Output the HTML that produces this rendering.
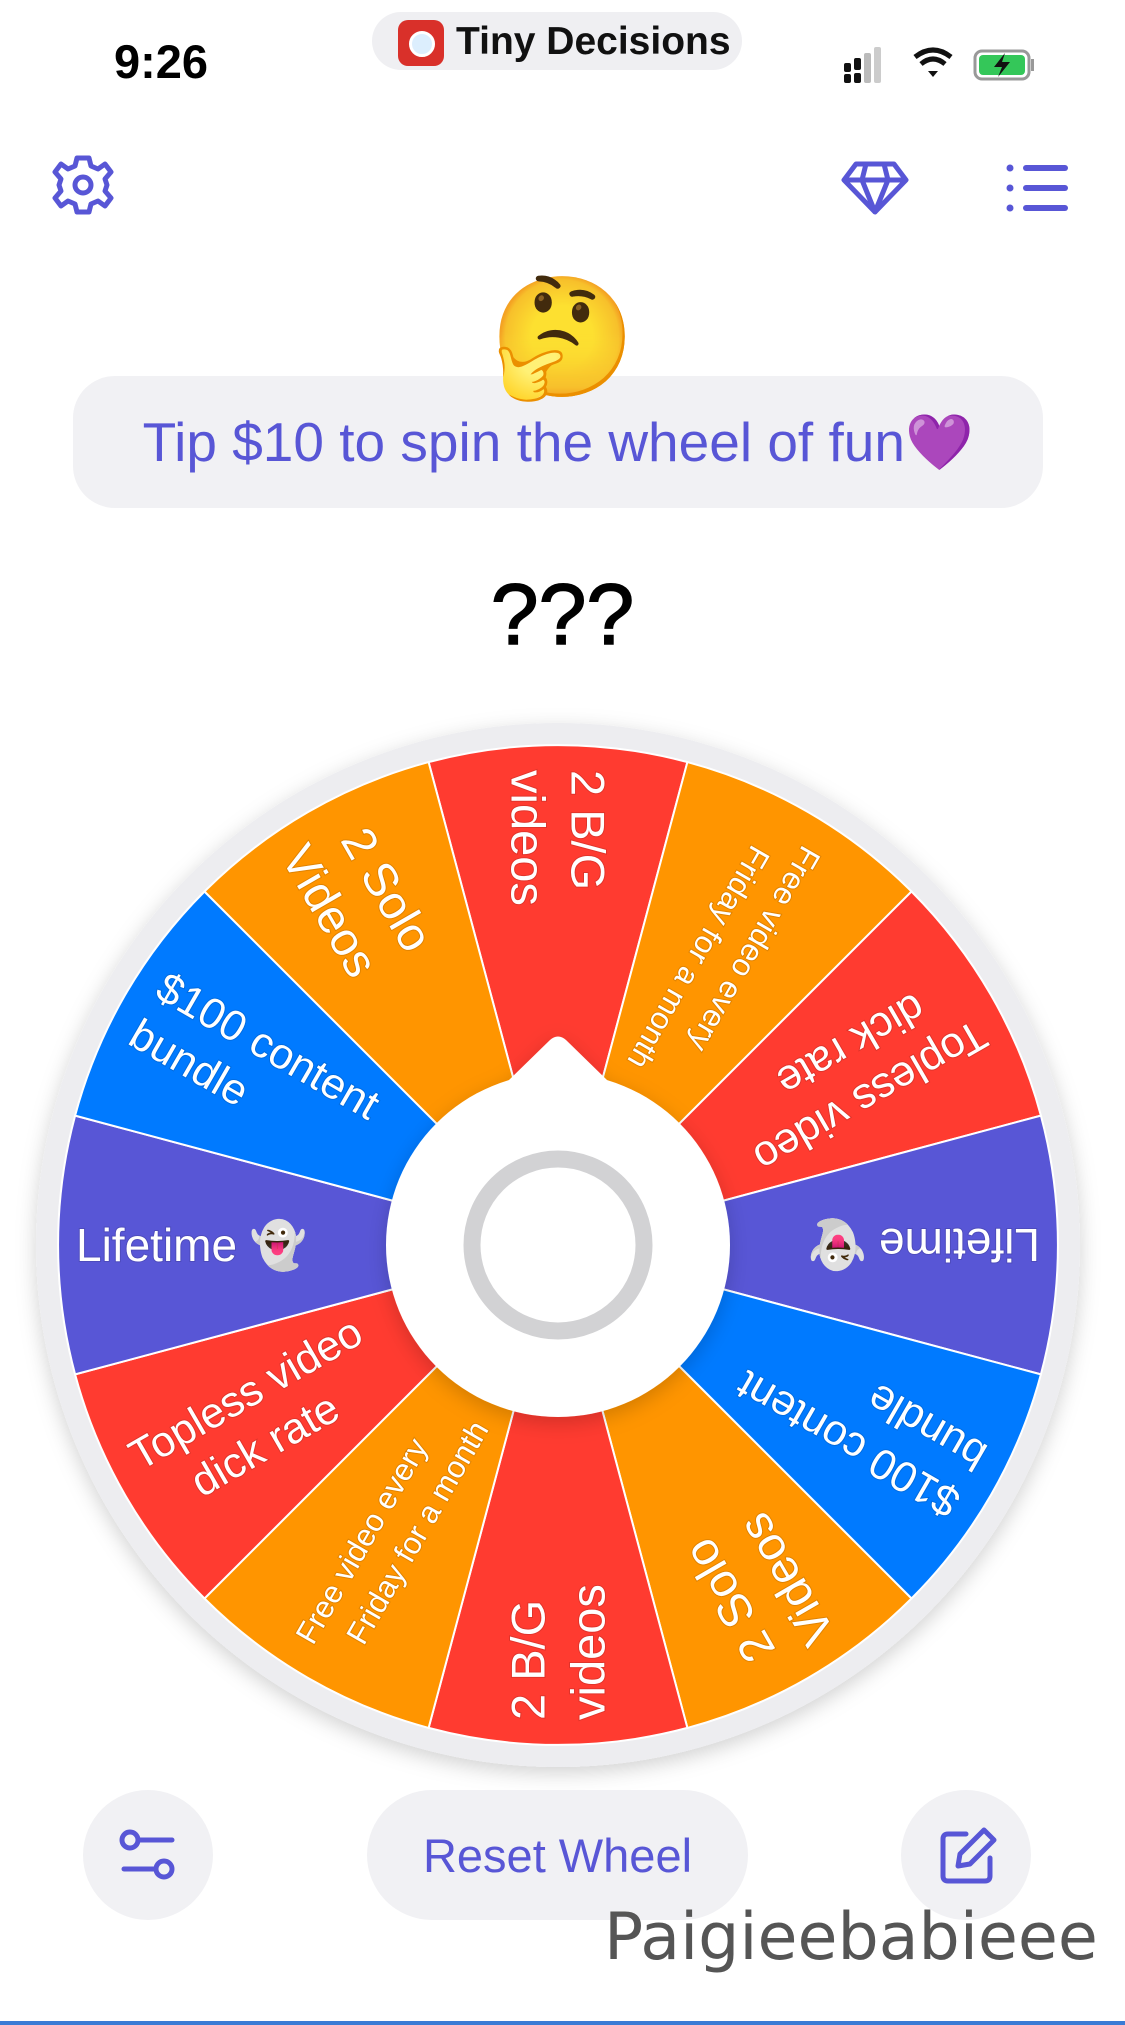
<!DOCTYPE html>
<html><head><meta charset="utf-8"><style>
html,body{margin:0;padding:0;background:#fff;}
body{width:1125px;height:2025px;position:relative;overflow:hidden;font-family:"Liberation Sans",sans-serif;}
.abs{position:absolute;}
</style></head><body>
<div class="abs" style="left:114px;top:34px;font-size:47px;font-weight:600;color:#000;">9:26</div>
<div class="abs" style="left:372px;top:12px;width:370px;height:58px;border-radius:29px;background:#efeff2;"></div>
<div class="abs" style="left:398px;top:20px;width:46px;height:46px;border-radius:10px;background:#d9302a;"></div>
<div class="abs" style="left:409px;top:31px;width:20px;height:20px;border-radius:50%;border:3px solid #fff;background:#dceefd;"></div>
<div class="abs" style="left:456px;top:20px;font-size:39px;font-weight:600;color:#111;">Tiny Decisions</div>
<svg class="abs" style="left:840px;top:45px" width="220" height="40" viewBox="0 0 220 40">
<rect x="4" y="18" width="7" height="9" rx="2" fill="#111"/><rect x="4" y="29" width="7" height="9" rx="2" fill="#111"/>
<rect x="14" y="13" width="7" height="12" rx="2" fill="#111"/><rect x="14" y="28" width="7" height="10" rx="2" fill="#111"/>
<rect x="24" y="8" width="7" height="30" rx="2" fill="#bbb"/><rect x="34" y="2" width="7" height="36" rx="2" fill="#ccc"/>
<path d="M75 12 Q93 -2 111 12" stroke="#111" stroke-width="5" fill="none"/><path d="M81 19 Q93 9 105 19" stroke="#111" stroke-width="5" fill="none"/><path d="M88 26 L93 32 L98 26 Z" fill="#111"/>
<rect x="135" y="6" width="54" height="28" rx="7" fill="none" stroke="#999" stroke-width="3"/><rect x="139" y="10" width="46" height="20" rx="4" fill="#34c759"/><rect x="191" y="14" width="3" height="12" fill="#999"/>
<path d="M165 8 L154 22 L162 22 L158 32 L170 17 L162 17 Z" fill="#111"/>
</svg>
<svg class="abs" style="left:50px;top:152px" width="66" height="66" viewBox="-33 -33 66 66">
<g fill="none" stroke="#5856D6" stroke-width="5" stroke-linejoin="round">
<path d="M-6 -27 L6 -27 L8 -19 L15 -16 L22 -21 L28 -13 L22 -6 L24 0 L22 6 L28 13 L22 21 L15 16 L8 19 L6 27 L-6 27 L-8 19 L-15 16 L-22 21 L-28 13 L-22 6 L-24 0 L-22 -6 L-28 -13 L-22 -21 L-15 -16 L-8 -19 Z"/>
<circle r="8"/></g></svg>
<svg class="abs" style="left:840px;top:160px" width="70" height="56" viewBox="0 0 70 56"><g fill="none" stroke="#5856D6" stroke-width="5" stroke-linejoin="round"><path d="M16 4 L54 4 L66 20 L35 52 L4 20 Z M4 20 L66 20 M26 4 L22 20 L35 52 L48 20 L44 4"/></g></svg>
<svg class="abs" style="left:1005px;top:162px" width="66" height="52" viewBox="0 0 66 52"><g fill="#5856D6"><circle cx="5" cy="6" r="3.5"/><circle cx="5" cy="26" r="3.5"/><circle cx="5" cy="46" r="3.5"/><rect x="18" y="3" width="45" height="6" rx="3"/><rect x="18" y="23" width="45" height="6" rx="3"/><rect x="18" y="43" width="45" height="6" rx="3"/></g></svg>
<div class="abs" style="left:73px;top:376px;width:970px;height:132px;border-radius:42px;background:#f1f1f4;"></div>
<div class="abs" style="left:0;top:268px;width:1125px;text-align:center;font-size:118px;line-height:140px;font-family:'Noto Color Emoji','Liberation Sans',sans-serif;">🤔</div>
<div class="abs" style="left:73px;top:410px;width:970px;text-align:center;font-size:55px;color:#5856D6;">Tip $10 to spin the wheel of fun<span style="color:#a64ee6">💜</span></div>
<div class="abs" style="left:0;top:566px;width:1125px;text-align:center;font-size:86px;color:#000;-webkit-text-stroke:1.5px #000;">???</div>
<svg class="abs" style="left:0;top:0" width="1125" height="2025" viewBox="0 0 1125 2025">
<defs><filter id="sh" x="-30%" y="-30%" width="160%" height="160%"><feDropShadow dx="0" dy="6" stdDeviation="10" flood-opacity="0.18"/></filter></defs>
<g transform="translate(558 1245)">
<circle r="522" fill="#ededf0" filter="url(#sh)"/>
<g stroke="#fff" stroke-width="2">
<path transform="rotate(-90)" d="M0 0 L482.9 -129.4 A500 500 0 0 1 482.9 129.4 Z" fill="#FF3B30"/>
<path transform="rotate(-60)" d="M0 0 L482.9 -129.4 A500 500 0 0 1 482.9 129.4 Z" fill="#FF9500"/>
<path transform="rotate(-30)" d="M0 0 L482.9 -129.4 A500 500 0 0 1 482.9 129.4 Z" fill="#FF3B30"/>
<path transform="rotate(0)" d="M0 0 L482.9 -129.4 A500 500 0 0 1 482.9 129.4 Z" fill="#5856D6"/>
<path transform="rotate(30)" d="M0 0 L482.9 -129.4 A500 500 0 0 1 482.9 129.4 Z" fill="#007AFF"/>
<path transform="rotate(60)" d="M0 0 L482.9 -129.4 A500 500 0 0 1 482.9 129.4 Z" fill="#FF9500"/>
<path transform="rotate(90)" d="M0 0 L482.9 -129.4 A500 500 0 0 1 482.9 129.4 Z" fill="#FF3B30"/>
<path transform="rotate(120)" d="M0 0 L482.9 -129.4 A500 500 0 0 1 482.9 129.4 Z" fill="#FF9500"/>
<path transform="rotate(150)" d="M0 0 L482.9 -129.4 A500 500 0 0 1 482.9 129.4 Z" fill="#FF3B30"/>
<path transform="rotate(180)" d="M0 0 L482.9 -129.4 A500 500 0 0 1 482.9 129.4 Z" fill="#5856D6"/>
<path transform="rotate(210)" d="M0 0 L482.9 -129.4 A500 500 0 0 1 482.9 129.4 Z" fill="#007AFF"/>
<path transform="rotate(240)" d="M0 0 L482.9 -129.4 A500 500 0 0 1 482.9 129.4 Z" fill="#FF9500"/>
</g>
<g fill="#fff" font-family="Liberation Sans, sans-serif" dominant-baseline="central" style="paint-order:stroke" stroke="rgba(0,0,0,0.12)" stroke-width="2">
<g transform="rotate(90)" font-size="47"><text x="-475" y="-30">2 B/G</text><text x="-475" y="30">videos</text></g>
<g transform="rotate(120)" font-size="31"><text x="-470" y="-22">Free video every</text><text x="-445" y="22">Friday for a month</text></g>
<g transform="rotate(150)" font-size="43"><text x="-475" y="-27">Topless video</text><text x="-435" y="27">dick rate</text></g>
<g transform="rotate(180)" font-size="46"><text x="-482" y="0">Lifetime 👻</text></g>
<g transform="rotate(210)" font-size="43"><text x="-475" y="-27">$100 content</text><text x="-475" y="27">bundle</text></g>
<g transform="rotate(240)" font-size="47"><text x="-460" y="-30">2 Solo</text><text x="-475" y="30">Videos</text></g>
<g transform="rotate(270)" font-size="47"><text x="-475" y="-30">2 B/G</text><text x="-475" y="30">videos</text></g>
<g transform="rotate(300)" font-size="31"><text x="-470" y="-22">Free video every</text><text x="-445" y="22">Friday for a month</text></g>
<g transform="rotate(330)" font-size="43"><text x="-475" y="-27">Topless video</text><text x="-435" y="27">dick rate</text></g>
<g transform="rotate(360)" font-size="46"><text x="-482" y="0">Lifetime 👻</text></g>
<g transform="rotate(390)" font-size="43"><text x="-475" y="-27">$100 content</text><text x="-475" y="27">bundle</text></g>
<g transform="rotate(420)" font-size="47"><text x="-460" y="-30">2 Solo</text><text x="-475" y="30">Videos</text></g>
</g>
<g filter="url(#sh)"><circle r="172" fill="#fff"/><path d="M-50 -164 L-8 -205 Q0 -212 8 -205 L50 -164 Z" fill="#fff"/></g>
<circle r="86" fill="#fff" stroke="#d2d2d4" stroke-width="17"/>
</g>
</svg>
<div class="abs" style="left:83px;top:1790px;width:130px;height:130px;border-radius:50%;background:#f1f1f4;"></div>
<svg class="abs" style="left:118px;top:1826px" width="60" height="58" viewBox="0 0 60 58"><g fill="none" stroke="#5856D6" stroke-width="5" stroke-linecap="round"><circle cx="12" cy="14" r="8"/><line x1="20" y1="14" x2="54" y2="14"/><circle cx="46" cy="43" r="8"/><line x1="6" y1="43" x2="38" y2="43"/></g></svg>
<div class="abs" style="left:367px;top:1790px;width:381px;height:130px;border-radius:65px;background:#f1f1f4;"></div>
<div class="abs" style="left:367px;top:1828px;width:381px;text-align:center;font-size:47px;color:#5856D6;">Reset Wheel</div>
<div class="abs" style="left:901px;top:1790px;width:130px;height:130px;border-radius:50%;background:#f1f1f4;"></div>
<svg class="abs" style="left:938px;top:1826px" width="60" height="60" viewBox="0 0 60 60"><g fill="none" stroke="#5856D6" stroke-width="5" stroke-linejoin="round" stroke-linecap="round"><path d="M28 8 L10 8 Q5 8 5 13 L5 50 Q5 55 10 55 L47 55 Q52 55 52 50 L52 32"/><path d="M46 4 L56 14 L32 38 L20 40 L22 28 Z"/></g></svg>
<div class="abs" style="left:604px;top:1900px;font-family:'DejaVu Sans',sans-serif;font-size:65px;color:#555;">Paigieebabieee</div>
<div class="abs" style="left:0;top:2021px;width:1125px;height:4px;background:#3a7bd5;"></div>
</body></html>
